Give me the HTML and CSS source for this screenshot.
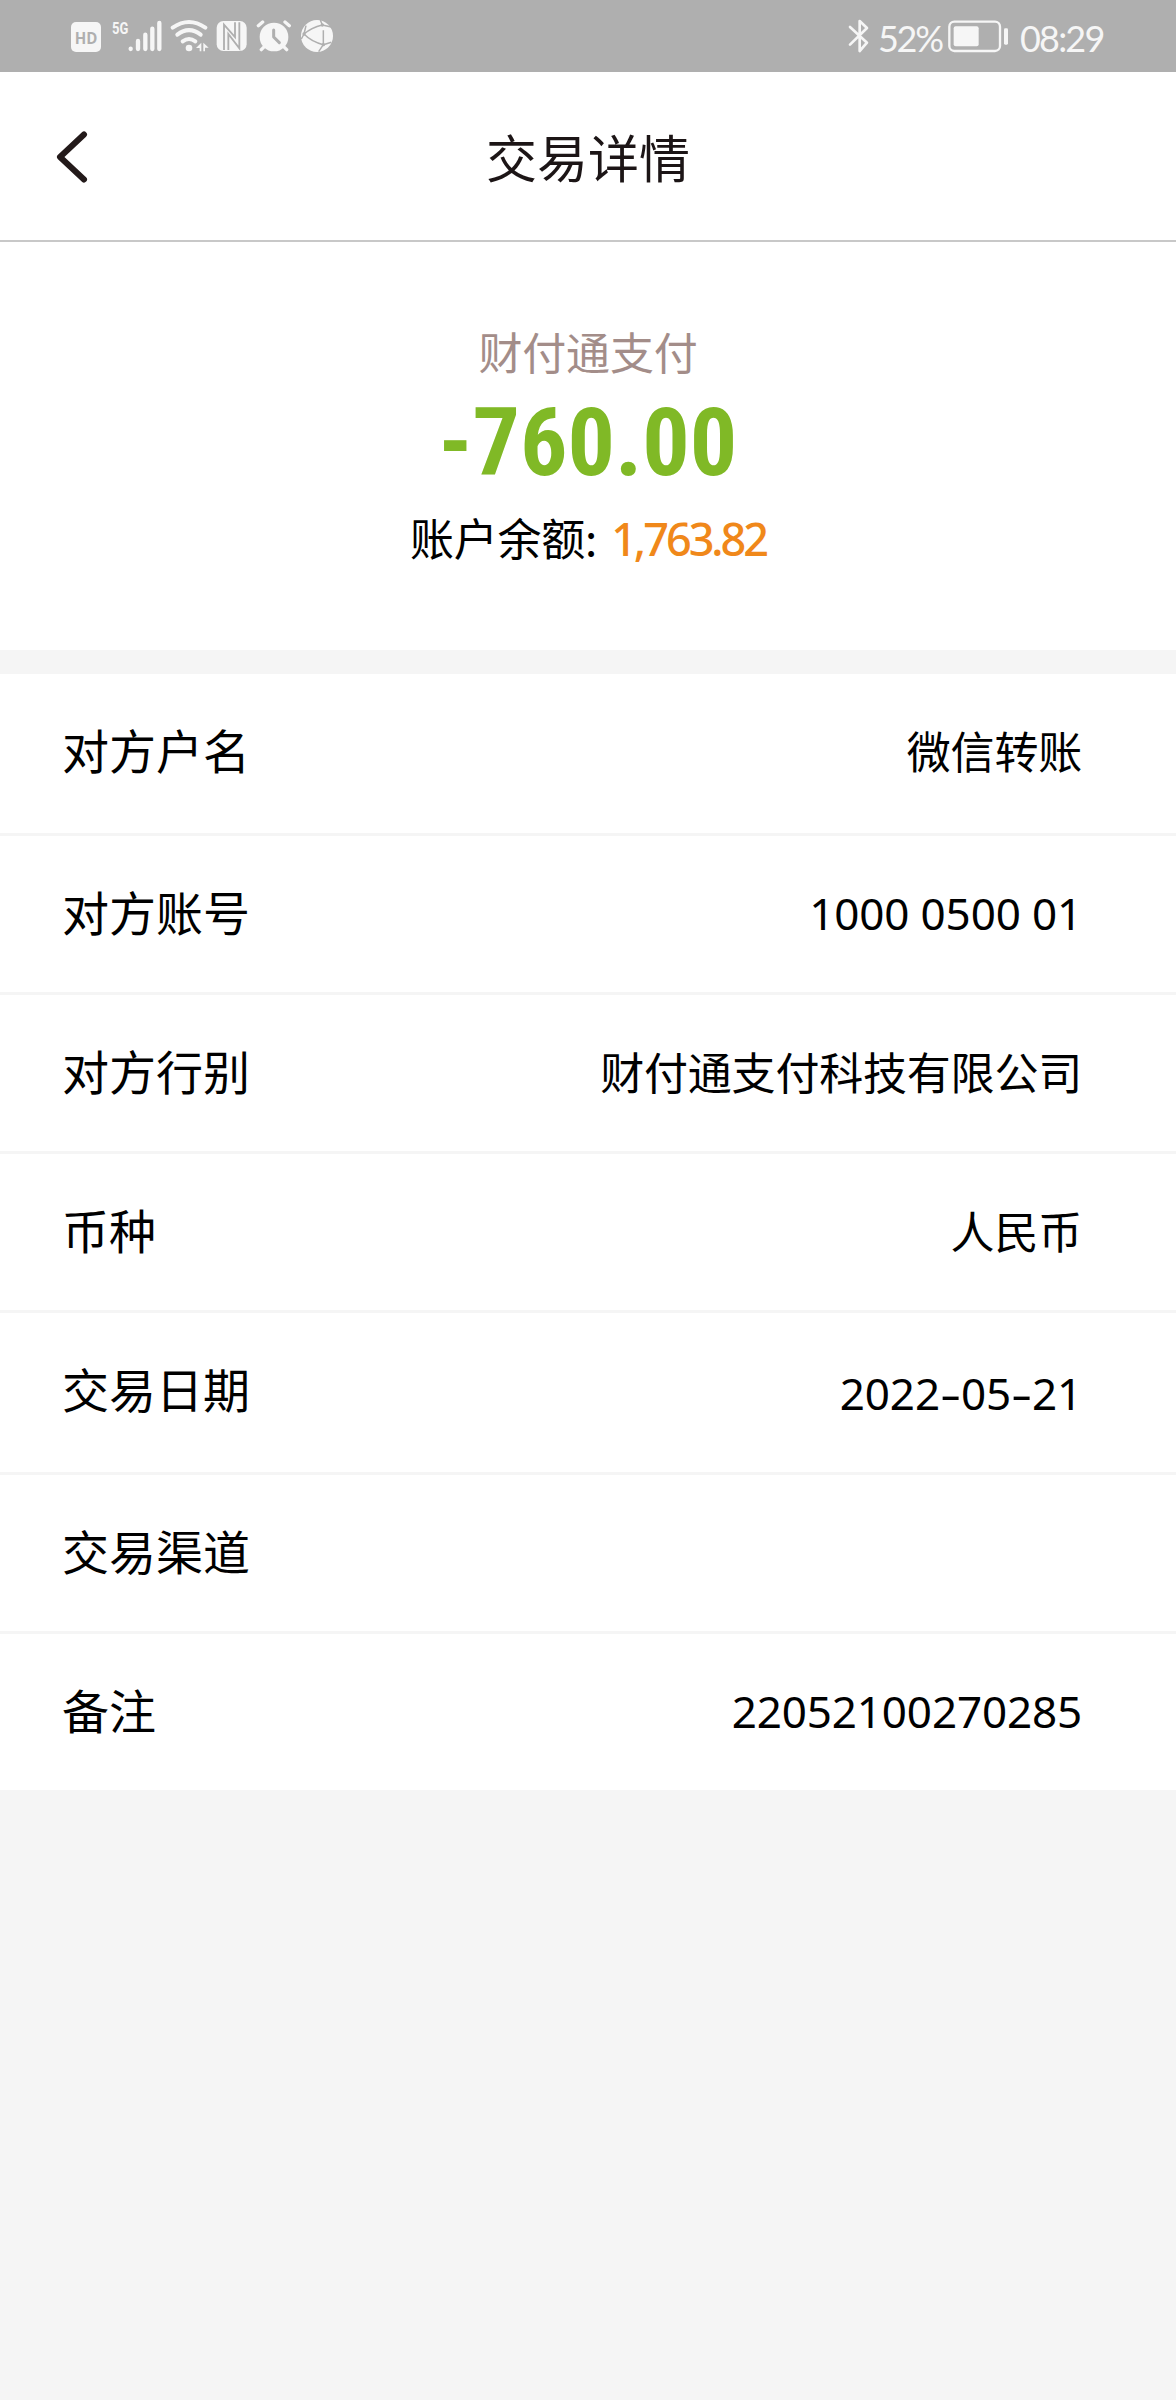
FILE: index.html
```html
<!DOCTYPE html>
<html lang="zh-CN">
<head>
<meta charset="utf-8">
<title>交易详情</title>
<link rel="stylesheet" href="styles.css">
</head>
<body>
<div class="status">
  <div class="status-left">
    <svg class="ic-hd" width="30" height="34" viewBox="0 0 90 102"><rect x="0" y="9" width="90" height="90" rx="15" fill="#f6f6f6"/><text x="45" y="75" class="hd-text" textLength="68" lengthAdjust="spacingAndGlyphs">HD</text></svg>
    <svg class="ic-signal" width="50" height="34" viewBox="0 0 150 102"><text x="0" y="45" class="g5-text" textLength="49" lengthAdjust="spacingAndGlyphs">5G</text><g stroke="#f6f6f6" stroke-width="13" stroke-linecap="round"><path d="M56 89v1M78 66v24M100 47v43M121 29v61M142 12v78"/></g></svg>
    <svg class="ic-wifi" width="39" height="34" viewBox="0 0 117 102"><g fill="none" stroke="#f6f6f6" stroke-width="12" stroke-linecap="round"><path d="M8 26Q57-8 106 26"/><path d="M22 47Q57 20 92 47"/><path d="M38 67Q57 53 76 67"/></g><circle cx="57" cy="87" r="10" fill="#f6f6f6"/><path d="M78 87l16-16v26h-5V87zM100 71l16 15-11 0v11h-5z" fill="#f6f6f6"/></svg>
    <svg class="ic-nfc" width="31" height="34" viewBox="0 0 93 102"><rect x="2" y="6" width="90" height="90" rx="20" fill="#f6f6f6"/><path d="M24 93V17L57 54V10M37 93V45L70 88V10" fill="none" stroke="#afafaf" stroke-width="5.500"/></svg>
    <svg class="ic-alarm" width="35" height="34" viewBox="0 0 105 102"><circle cx="54" cy="54" r="43" fill="#f6f6f6"/><path d="M7 20L20 9M100 20L87 9M25 83L16 92M83 83l9 9" stroke="#f6f6f6" stroke-width="10" stroke-linecap="round"/><path d="M53 33V54L70 71" fill="none" stroke="#afafaf" stroke-width="9" stroke-linecap="round" stroke-linejoin="round"/></svg>
    <svg class="ic-globe" width="34" height="34" viewBox="0 0 102 102"><circle cx="51" cy="51" r="48" fill="#f6f6f6"/><g fill="none" stroke="#afafaf" stroke-width="4.500"><path d="M12 45Q34 26 67 18M12 45Q34 68 70 77M70 34V77M67 18L94 24M67 18L61 3M12 45L18 20M12 45L4 60M70 77L94 70M70 77L56 98"/></g><g fill="#afafaf"><circle cx="67" cy="18" r="5"/><circle cx="12" cy="45" r="5"/><circle cx="70" cy="77" r="5"/></g></svg>
  </div>
  <div class="status-right">
    <svg class="ic-bt" width="22" height="34" viewBox="0 0 66 102"><path d="M6 24L57 71L35 96V6L57 27L6 77" fill="none" stroke="#f6f6f6" stroke-width="8" stroke-linejoin="round" stroke-linecap="round"/></svg>
    <span class="pct">52%</span>
    <svg class="ic-bat" width="60" height="34" viewBox="0 0 180 102"><rect x="4" y="8" width="152" height="88" rx="15" fill="none" stroke="#f6f6f6" stroke-width="7"/><rect x="17" y="22" width="75" height="60" rx="6" fill="#f6f6f6"/><rect x="168" y="28" width="12" height="49" rx="4" fill="#f6f6f6"/></svg>
    <span class="clock">08:29</span>
  </div>
</div>

<header class="nav">
  <svg class="back" width="34" height="54" viewBox="0 0 34 54"><path d="M30 4.500L6 27L30 49.500" fill="none" stroke="#231a1a" stroke-width="6" stroke-linecap="round" stroke-linejoin="round"/></svg>
  <h1 class="title">交易详情</h1>
</header>

<section class="summary">
  <div class="payee">财付通支付</div>
  <div class="amount">-760.00</div>
  <div class="balance"><span class="balance-label">账户余额:</span><span class="balance-value">1,763.82</span></div>
</section>

<dl class="details">
  <div class="row tall"><dt>对方户名</dt><dd>微信转账</dd></div>
  <div class="row"><dt>对方账号</dt><dd class="num">1000 0500 01</dd></div>
  <div class="row"><dt>对方行别</dt><dd>财付通支付科技有限公司</dd></div>
  <div class="row"><dt>币种</dt><dd>人民币</dd></div>
  <div class="row tall"><dt>交易日期</dt><dd class="num date">2022<span class="dash">-</span>05<span class="dash">-</span>21</dd></div>
  <div class="row"><dt>交易渠道</dt><dd></dd></div>
  <div class="row"><dt>备注</dt><dd class="num">22052100270285</dd></div>
</dl>
</body>
</html>
```

FILE: styles.css
```css
* { box-sizing: border-box; }
body {
  margin: 0;
  min-height: 2400px;
  background: #f5f5f5;
  color: #000;
  font-family: "Noto Sans CJK SC", sans-serif;
}
.status {
  height: 72px;
  padding: 0 71px 0 71px;
  background: #afafaf;
  color: #f6f6f6;
  display: flex;
  justify-content: space-between;
}
.status svg { display: block; flex: none; margin-top: 19px; }
.status-left, .status-right { display: flex; }
.hd-text { font: 700 50px "Open Sans", sans-serif; fill: #afafaf; text-anchor: middle; }
.g5-text { font: 700 52px Roboto, sans-serif; fill: #f6f6f6; }
.ic-signal { margin-left: 11px; }
.ic-wifi { margin-left: 8px; }
.ic-nfc { margin-left: 7px; }
.ic-alarm, .ic-globe { margin-left: 9px; }
.pct, .clock { flex: none; font: 400 36px/72px Lato, sans-serif; white-space: nowrap; padding-top: 2px; }
.pct { width: 78px; padding-left: 8px; letter-spacing: -2.3px; }
.clock { width: 97px; padding-left: 12px; letter-spacing: -1.8px; }

.nav {
  height: 170px;
  padding: 0 54px;
  background: #fff;
  border-bottom: 2px solid #c8c8c8;
  display: grid;
  grid-template-columns: 34px 1fr 34px;
}
.back { display: block; margin-top: 58px; }
.title { margin: 0; font-size: 51px; line-height: 168px; font-weight: 400; text-align: center; color: #1c1516; }

.summary {
  height: 408px;
  padding-top: 77px;
  background: #fff;
  text-align: center;
}
.payee { font-size: 44px; line-height: 64px; letter-spacing: -.2px; color: #a38d89; }
.amount {
  font-family: "Roboto Condensed", Roboto, sans-serif;
  font-stretch: 75%;
  font-weight: 700;
  font-size: 94px;
  line-height: 121px;
  color: #80b926;
}
.balance { display: flex; justify-content: center; line-height: 64px; font-size: 44px; padding-top: 1px; }
.balance-label { letter-spacing: -.2px; }
.balance-value { margin-left: 14px; padding-top: 2px; font-family: "Noto Sans", sans-serif; font-weight: 500; font-size: 45px; letter-spacing: -3px; color: #f0881a; }

.details { margin: 24px 0 0; background: #fff; }
.row {
  height: 159px;
  padding: 0 94px 0 62px;
  border-bottom: 3px solid #f5f5f5;
  display: flex;
  justify-content: space-between;
}
.row.tall { height: 162px; }
.row dt { font-size: 47px; line-height: 149px; }
.row dd { margin: 0; font-size: 44px; line-height: 152px; letter-spacing: -.2px; }
.row .num { font-family: "Noto Sans", sans-serif; letter-spacing: -.15px; line-height: 154px; }
.row .date { padding-top: 3px; }
.dash { display: inline-block; width: 21px; text-align: center; transform: scaleX(1.5); }
```
